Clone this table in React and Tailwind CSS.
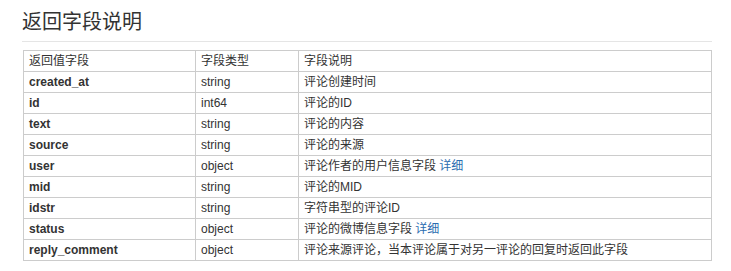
import React from "react";

const rows = [
  { name: "created_at", type: "string", desc: "评论创建时间" },
  { name: "id", type: "int64", desc: "评论的ID" },
  { name: "text", type: "string", desc: "评论的内容" },
  { name: "source", type: "string", desc: "评论的来源" },
  { name: "user", type: "object", desc: "评论作者的用户信息字段", link: true },
  { name: "mid", type: "string", desc: "评论的MID" },
  { name: "idstr", type: "string", desc: "字符串型的评论ID" },
  { name: "status", type: "object", desc: "评论的微博信息字段", link: true },
  { name: "reply_comment", type: "object", desc: "评论来源评论，当本评论属于对另一评论的回复时返回此字段" },
];

const cell = "border border-[#cccccc] px-[5px] h-[21px] py-0 leading-[20px] align-middle";

const App = () => {
  return (
    <div
      className="bg-white min-h-screen pl-[22px] pr-[19px] pt-[9px] text-[#333333]"
      style={{ fontFamily: '"Liberation Sans", Arial, "Noto Sans CJK SC", sans-serif' }}
    >
      <h2 className="text-[20px] leading-[26px] font-normal pb-[6px] border-b border-[#e5e5e5] mb-[8px]">
        返回字段说明
      </h2>
      <table className="border-collapse ml-[1px] w-[689px] text-[12px]">
        <thead>
          <tr>
            <th className={`${cell} w-[172px] text-left font-normal`}>返回值字段</th>
            <th className={`${cell} w-[103px] text-left font-normal`}>字段类型</th>
            <th className={`${cell} text-left font-normal`}>字段说明</th>
          </tr>
        </thead>
        <tbody>
          {rows.map((r) => (
            <tr key={r.name}>
              <td className={`${cell} font-bold`}>{r.name}</td>
              <td className={cell}>{r.type}</td>
              <td className={cell}>
                {r.desc}
                {r.link && (
                  <>
                    {" "}
                    <a href="#" className="text-[#2b6cb0]">详细</a>
                  </>
                )}
              </td>
            </tr>
          ))}
        </tbody>
      </table>
    </div>
  );
};

export default App;
